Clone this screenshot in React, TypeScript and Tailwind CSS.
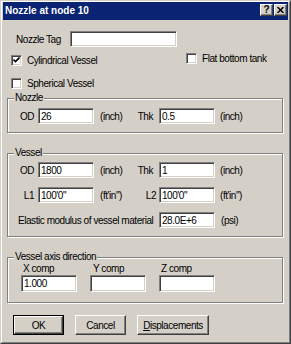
import type { ReactNode } from "react";

// Classic Win2000 property dialog: "Nozzle at node 10".

const face = "bg-[#d4d0c8]";

function Edit({ value = "", width }: { value?: string; width: string }) {
  return (
    <div
      className={`${width} flex h-[16px] shrink-0 items-center border border-t-[#808080] border-l-[#808080] border-r-white border-b-white bg-white pl-[2px] shadow-[inset_1px_1px_0_#404040,inset_-1px_-1px_0_#d4d0c8]`}
    >
      <span className="leading-[11px]">{value}</span>
    </div>
  );
}

function Check({ checked, label }: { checked?: boolean; label: string }) {
  return (
    <div className="flex items-center gap-[5px]">
      <div className="flex h-[11px] w-[11px] shrink-0 items-center justify-center border border-t-[#808080] border-l-[#808080] border-r-white border-b-white bg-white shadow-[inset_1px_1px_0_#404040,inset_-1px_-1px_0_#d4d0c8]">
        {checked && (
          <svg width="7" height="7" viewBox="0 0 7 7">
            <path d="M0.5 2.5 L2.5 4.5 L6.5 0.5" stroke="#000" strokeWidth="1.6" fill="none" />
          </svg>
        )}
      </div>
      <span className="leading-[11px]">{label}</span>
    </div>
  );
}

function Group({ title, className, children }: { title: string; className: string; children: ReactNode }) {
  return (
    <div
      className={`relative ml-[4px] mr-[5px] border border-[#808080] shadow-[inset_1px_1px_0_#fff,1px_1px_0_#fff] ${className}`}
    >
      <span className={`absolute left-[6px] top-[-7px] ${face} px-px leading-[11px]`}>{title}</span>
      {children}
    </div>
  );
}

function Button({ children, width, isDefault }: { children: ReactNode; width: string; isDefault?: boolean }) {
  const inner =
    "flex h-full w-full items-center justify-center border border-t-white border-l-white border-r-[#404040] border-b-[#404040] shadow-[inset_-1px_-1px_0_#808080]";
  return (
    <div className={`${width} h-[20px] ${isDefault ? "border border-black" : ""}`}>
      <div className={inner}>{children}</div>
    </div>
  );
}

function CaptionButton({ children }: { children: ReactNode }) {
  return (
    <div
      className={`flex h-[12px] w-[13px] items-center justify-center border border-t-white border-l-white border-r-[#404040] border-b-[#404040] ${face} shadow-[inset_-1px_-1px_0_#808080]`}
    >
      {children}
    </div>
  );
}

function PairRow({
  left,
  leftVal,
  unit,
  right,
  rightVal,
  rightPad,
  className = "",
}: {
  left: string;
  leftVal: string;
  unit: string;
  right: string;
  rightVal: string;
  rightPad: string;
  className?: string;
}) {
  return (
    <div className={`flex h-[16px] items-center ${className}`}>
      <span className="w-[30px] pr-[4px] text-right">{left}</span>
      <Edit value={leftVal} width="w-[56px]" />
      <div className="flex w-[65px] items-center justify-between pl-[6px]">
        <span>{unit}</span>
        <span className={rightPad}>{right}</span>
      </div>
      <Edit value={rightVal} width="w-[56px]" />
      <span className="pl-[5px]">{unit}</span>
    </div>
  );
}

export default function App() {
  return (
    <div className="h-[344px] w-[291px] border border-t-[#d4d0c8] border-l-[#d4d0c8] border-r-[#404040] border-b-[#404040] bg-[#d4d0c8] font-['Liberation_Sans',Arial,sans-serif] text-[10px] tracking-[-0.45px] text-black">
      <div className="flex h-full flex-col border border-t-white border-l-white border-r-[#808080] border-b-[#808080] px-px">
        {/* title bar */}
        <div className="flex h-[18px] items-start justify-between bg-[#0a2372] pl-[2px] pr-px">
          <span className="pt-[3px] text-[10px] font-bold leading-[12px] tracking-normal text-white">
            Nozzle at node 10
          </span>
          <div className="flex gap-px pt-[2px]">
            <CaptionButton>
              <span className="text-[10px] font-bold leading-[10px] tracking-normal">?</span>
            </CaptionButton>
            <CaptionButton>
              <svg width="7" height="6" viewBox="0 0 7 6">
                <path d="M0.5 0 L6.5 6 M6.5 0 L0.5 6" stroke="#000" strokeWidth="1.5" />
              </svg>
            </CaptionButton>
          </div>
        </div>

        {/* Nozzle tag */}
        <div className="mt-[11px] flex h-[16px] items-center pl-[13px]">
          <span className="w-[54px]">Nozzle Tag</span>
          <Edit width="w-[107px]" />
        </div>

        <div className="mt-[6px] flex items-start">
          <div className="mt-[2px] w-[183px] pl-[8px]">
            <Check checked label="Cylindrical Vessel" />
          </div>
          <Check label="Flat bottom tank" />
        </div>

        <div className="mt-[12px] pl-[8px]">
          <Check label="Spherical Vessel" />
        </div>

        <Group title="Nozzle" className="mt-[9px] pt-[9px] pb-[8px]">
          <PairRow left="OD" leftVal="26" unit="(inch)" right="Thk" rightVal="0.5" rightPad="pr-[6px]" />
        </Group>

        <Group title="Vessel" className="mt-[20px] pt-[8px] pb-[8px]">
          <PairRow left="OD" leftVal="1800" unit="(inch)" right="Thk" rightVal="1" rightPad="pr-[6px]" />
          <PairRow
            className="mt-[9px]"
            left="L1"
            leftVal={"100'0\""}
            unit={"(ft'in\")"}
            right="L2"
            rightVal={"100'0\""}
            rightPad="pr-[3px]"
          />
          <div className="mt-[9px] flex h-[16px] items-center">
            <span className="w-[151px] pl-[10px]">Elastic modulus of vessel material</span>
            <Edit value="28.0E+6" width="w-[56px]" />
            <span className="pl-[6px]">(psi)</span>
          </div>
        </Group>

        <Group title="Vessel axis direction" className="mt-[20px] pt-[5px] pb-[10px]">
          <div className="flex h-[11px] items-center leading-[11px]">
            <span className="w-[70px] pl-[15px]">X comp</span>
            <span className="w-[68px] pl-[15px]">Y comp</span>
            <span className="pl-[15px]">Z comp</span>
          </div>
          <div className="mt-px flex items-center gap-[13px] pl-[13px]">
            <Edit value="1.000" width="w-[56px] !h-[17px]" />
            <Edit width="w-[56px] !h-[17px]" />
            <Edit width="w-[56px] !h-[17px]" />
          </div>
        </Group>

        <div className="mt-[12px] flex gap-[11px] pl-[10px]">
          <Button width="w-[51px]" isDefault>
            OK
          </Button>
          <Button width="w-[51px]">Cancel</Button>
          <Button width="w-[72px]">
            <span>
              <span className="underline">D</span>isplacements
            </span>
          </Button>
        </div>
      </div>
    </div>
  );
}
